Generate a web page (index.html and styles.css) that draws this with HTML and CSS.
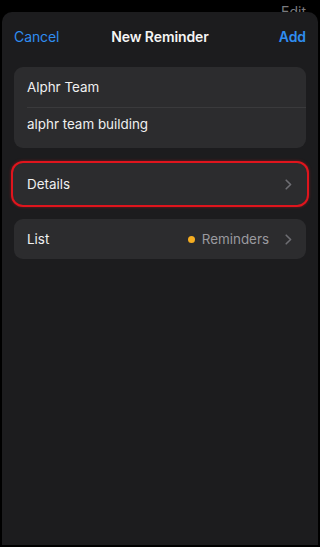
FILE: index.html
```html
<!DOCTYPE html>
<html lang="en">
<head>
<meta charset="utf-8">
<title>New Reminder</title>
<link rel="stylesheet" href="styles.css">
</head>
<body>
<div class="screen">
  <span class="behind-edit">Edit</span>
  <div class="sheet">
    <header class="nav">
      <span class="nav-btn">Cancel</span>
      <span class="nav-title">New Reminder</span>
      <span class="nav-btn nav-add">Add</span>
    </header>
    <section class="card">
      <div class="row">Alphr Team</div>
      <div class="sep"></div>
      <div class="row row-notes">alphr team building</div>
    </section>
    <section class="card card-single highlighted">
      <div class="row row-nav">
        <span>Details</span>
        <svg class="chev" width="7" height="11" viewBox="0 0 7 11"><path d="M1.2 1.2 L5.6 5.5 L1.2 9.8" fill="none" stroke="#6e6e73" stroke-width="1.6" stroke-linecap="round" stroke-linejoin="round"/></svg>
      </div>
    </section>
    <section class="card card-single">
      <div class="row row-nav">
        <span>List</span>
        <span class="value"><span class="dot"></span>Reminders
          <svg class="chev" width="7" height="11" viewBox="0 0 7 11"><path d="M1.2 1.2 L5.6 5.5 L1.2 9.8" fill="none" stroke="#6e6e73" stroke-width="1.6" stroke-linecap="round" stroke-linejoin="round"/></svg>
        </span>
      </div>
    </section>
  </div>
</div>
</body>
</html>
```
FILE: styles.css
```css
html, body {
  margin: 0;
  padding: 0;
  background: #000;
}
body {
  font-family: Inter, "Noto Sans", "Liberation Sans", sans-serif;
  color: #f2f2f2;
  -webkit-font-smoothing: antialiased;
}
.screen {
  position: relative;
  width: 320px;
  height: 547px;
  overflow: hidden;
  background: #000;
  padding-top: 12px;
  box-sizing: border-box;
}
.behind-edit {
  position: absolute;
  top: 3px;
  right: 14px;
  font-size: 14px;
  color: #7a7a7e;
  z-index: 0;
}
.sheet {
  position: relative;
  z-index: 1;
  margin: 0 2px;
  height: 533px;
  background: #1c1c1e;
  border-radius: 10px 10px 0 0;
  padding: 0 12px;
  box-sizing: border-box;
}
.nav {
  height: 48px;
  display: flex;
  align-items: center;
  justify-content: space-between;
  position: relative;
  font-size: 14px;
  letter-spacing: -0.1px;
}
.nav-btn {
  color: #2f8cf0;
}
.nav-add {
  font-weight: 600;
}
.nav-title {
  position: absolute;
  left: 0;
  right: 0;
  text-align: center;
  font-weight: 600;
  color: #f5f5f5;
  pointer-events: none;
}
.card {
  margin-top: 7px;
  background: #2c2c2e;
  border-radius: 9px;
  overflow: hidden;
}
.card-single {
  margin-top: 16px;
}
.card-single + .card-single {
  margin-top: 15px;
}
.row {
  height: 40px;
  display: flex;
  align-items: center;
  padding: 0 14px 0 13px;
  font-size: 13.4px;
  color: #f0f0f0;
  box-sizing: border-box;
}
.row-notes {
  padding-bottom: 8px;
}
.sep {
  height: 1px;
  margin-left: 13px;
  background: #3a3a3c;
}
.row-nav {
  justify-content: space-between;
}
.highlighted {
  overflow: visible;
  box-shadow: 0 0 0 1px #2c2c2e, 0 0 0 3px #e0151d, 0 0 3px 3px rgba(224, 21, 29, 0.5);
}
.value {
  display: flex;
  align-items: center;
  color: #9a9a9f;
}
.dot {
  width: 7px;
  height: 7px;
  border-radius: 50%;
  background: #f5ad21;
  margin-right: 7px;
}
.value .chev {
  margin-left: 16px;
}
.chev {
  display: block;
}
```
